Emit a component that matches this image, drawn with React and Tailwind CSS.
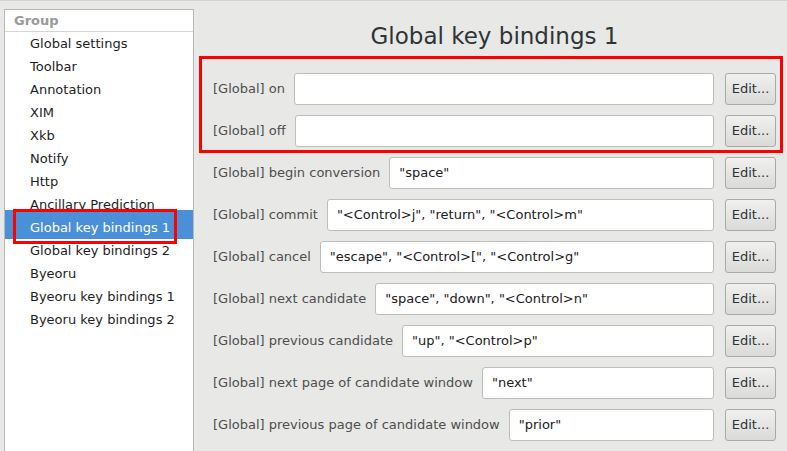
import React from 'react';

const groups = [
    'Global settings',
    'Toolbar',
    'Annotation',
    'XIM',
    'Xkb',
    'Notify',
    'Http',
    'Ancillary Prediction',
    'Global key bindings 1',
    'Global key bindings 2',
    'Byeoru',
    'Byeoru key bindings 1',
    'Byeoru key bindings 2',
];

const bindings = [
    { label: '[Global] on', value: '' },
    { label: '[Global] off', value: '' },
    { label: '[Global] begin conversion', value: '"space"' },
    { label: '[Global] commit', value: '"<Control>j", "return", "<Control>m"' },
    { label: '[Global] cancel', value: '"escape", "<Control>[", "<Control>g"' },
    { label: '[Global] next candidate', value: '"space", "down", "<Control>n"' },
    { label: '[Global] previous candidate', value: '"up", "<Control>p"' },
    { label: '[Global] next page of candidate window', value: '"next"' },
    { label: '[Global] previous page of candidate window', value: '"prior"' },
];

const selected = 'Global key bindings 1';

export default function App() {
    return (
        <div
            className="relative flex h-[451px] w-[787px] overflow-hidden bg-[#e8e8e7] border-t border-[#d4d4d2] text-[13px]"
            style={{ fontFamily: '"DejaVu Sans", Verdana, sans-serif' }}
        >
            {/* Group list */}
            <div className="ml-[4px] mt-[8px] w-[190px] shrink-0 bg-white border border-[#b8b8b5] border-b-0">
                <div className="h-[22px] border-b border-[#d6d6d3] pl-[9px] font-bold leading-[21px] text-[#9a9a98]">
                    Group
                </div>
                {groups.map((g) =>
                    g === selected ? (
                        <div
                            key={g}
                            className="relative -mt-[6px] h-[29px] bg-[#4a90d9] pl-[25px] pt-[6px] leading-[23px] text-white"
                        >
                            {g}
                        </div>
                    ) : (
                        <div key={g} className="h-[23px] pl-[25px] leading-[23px] text-[#1e1e1e]">
                            {g}
                        </div>
                    )
                )}
            </div>

            {/* Bindings */}
            <div className="flex-1 pl-[19px] pr-[11px] pt-[21px]">
                <h1 className="h-[28px] text-center text-[23px] leading-[28px] text-[#2e3436]">
                    Global key bindings 1
                </h1>
                <div className="mt-[23px] flex flex-col gap-[10px]">
                    {bindings.map((b) => (
                        <div key={b.label} className="flex h-[32px] items-center">
                            <span className="whitespace-nowrap text-[#4e4e4e]">{b.label}</span>
                            <div className="ml-[9px] flex h-[32px] flex-1 items-center rounded-[3px] border border-[#bdbdba] bg-white pl-[9px] text-[#202020] whitespace-nowrap">
                                {b.value}
                            </div>
                            <button className="ml-[11px] h-[32px] w-[51px] shrink-0 rounded-[3px] border border-[#a9a9a6] bg-gradient-to-b from-[#f0f0ef] to-[#dadad8] text-[#2e3436]">
                                Edit...
                            </button>
                        </div>
                    ))}
                </div>
            </div>

            {/* annotation boxes */}
            <div className="pointer-events-none absolute left-[13px] top-[208px] h-[35px] w-[164px] border-[3px] border-[#ff0000]" />
            <div className="pointer-events-none absolute left-[199px] top-[55px] h-[97px] w-[584px] border-[3px] border-[#ff0000]" />
        </div>
    );
}
